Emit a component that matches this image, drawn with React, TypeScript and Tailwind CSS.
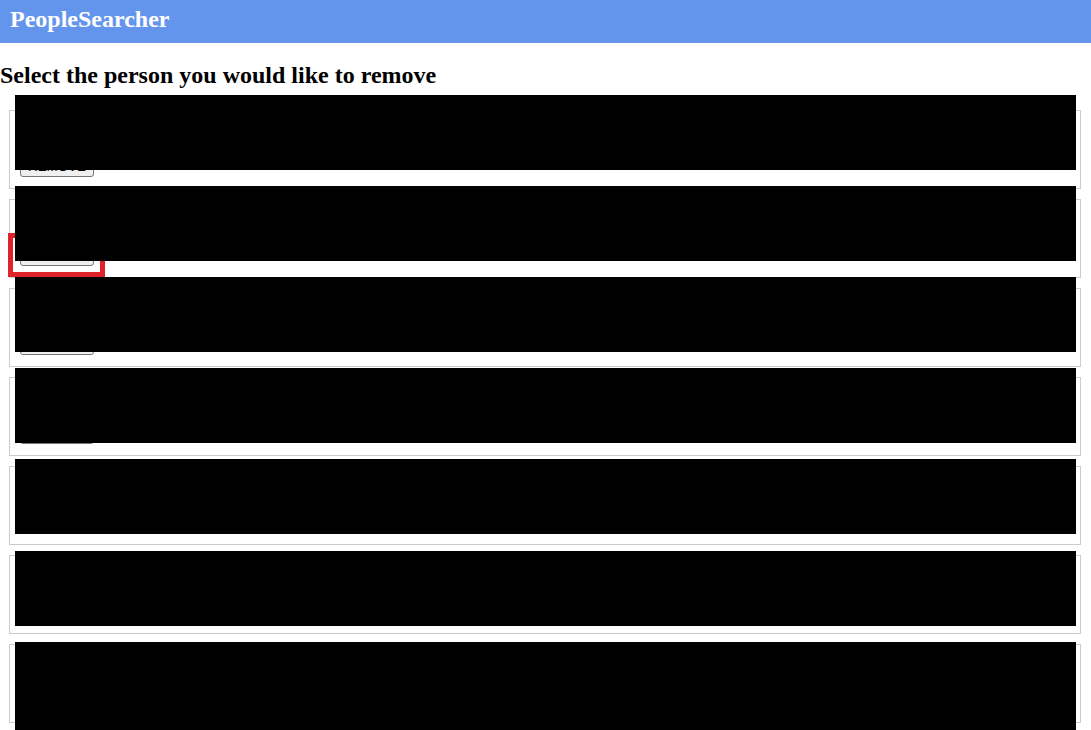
import React from 'react'

/* ── Result rows (details are redacted in the reference) ─────────────────── */
const people = [
  { id: 1, cover: 'top-[-16px] h-[75px]' },
  { id: 2, cover: 'top-[-14px] h-[75px]', highlight: true },
  { id: 3, cover: 'top-[-12px] h-[75px]' },
  { id: 4, cover: 'top-[-10px] h-[75px]' },
  { id: 5, cover: 'top-[-8px] h-[75px]' },
  { id: 6, cover: 'top-[-5px] h-[75px]' },
  { id: 7, cover: 'top-[-3px] h-[88px]' },
]

function PersonCard({ cover, highlight }: { cover: string; highlight?: boolean }) {
  return (
    <div className="relative h-[79px] border border-[#cccccc] px-[10px] pt-[10px] pb-[11px]">
      {/* name / location lines */}
      <div className="h-[35px]" />
      <button
        type="button"
        className="block h-[21px] w-[74px] rounded-[3px] border border-[#767676] bg-[#efefef]
                   text-[13.33px] leading-none text-black font-['Liberation_Sans',Arial,sans-serif]"
      >
        REMOVE
      </button>

      {highlight && (
        <div className="pointer-events-none absolute left-[-2px] top-[33px] h-[44px] w-[97px] border-[5px] border-[#e0232b]" />
      )}

      {/* redaction */}
      <div className={`absolute left-[5px] z-10 w-[1061px] bg-black ${cover}`} />
    </div>
  )
}

export default function App() {
  return (
    <div className="min-h-[730px] bg-white font-['Liberation_Serif','Times_New_Roman',serif] text-black">
      <header className="h-[43px] bg-[#6495ed] px-[10px] pt-[7px]">
        <h2 className="text-[24px] font-bold leading-[24px] text-white">PeopleSearcher</h2>
      </header>

      <h2 className="mt-[19px] text-[24px] font-bold leading-[27px]">
        Select the person you would like to remove
      </h2>

      <div className="flex flex-col gap-[10px] pt-[21px] pl-[9px] pr-[10px]">
        {people.map(p => (
          <PersonCard key={p.id} cover={p.cover} highlight={p.highlight} />
        ))}
      </div>
    </div>
  )
}
